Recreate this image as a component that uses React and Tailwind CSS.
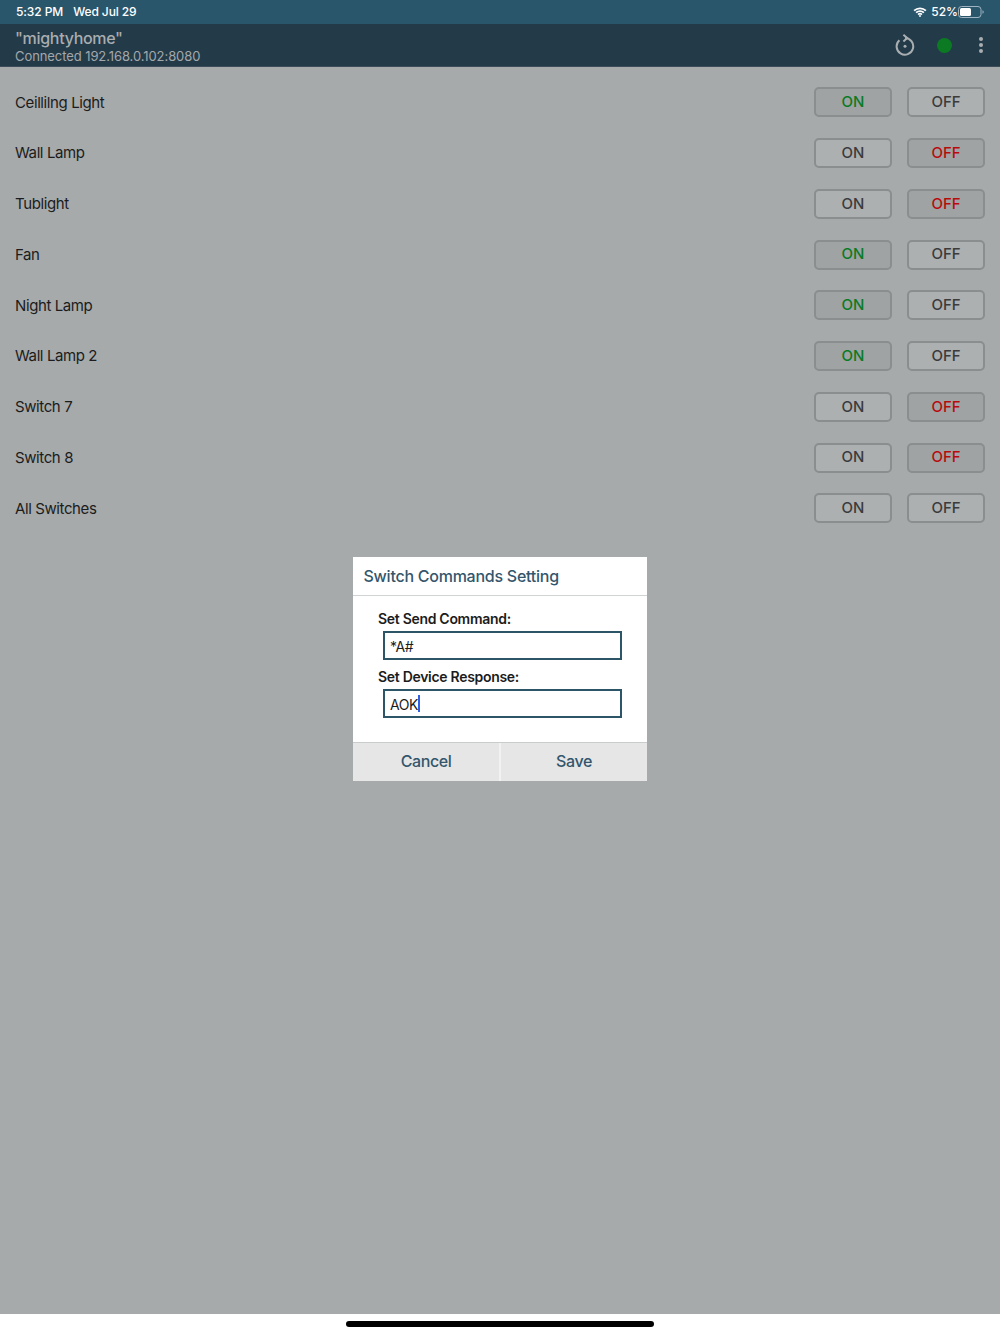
const rows = [
  ["Ceillilng Light", "on"],
  ["Wall Lamp", "off"],
  ["Tublight", "off"],
  ["Fan", "on"],
  ["Night Lamp", "on"],
  ["Wall Lamp 2", "on"],
  ["Switch 7", "off"],
  ["Switch 8", "off"],
  ["All Switches", "none"],
];

function SwitchButton({ label, active }) {
  const activeClass = label === "ON" ? "bg-[#9fa3a4] text-[#0b7a22]" : "bg-[#9fa3a4] text-[#b80c0c]";
  return (
    <div className={`flex h-[30px] w-[78px] items-center justify-center rounded-[5px] border-2 border-[#8a8e8f] text-[15px] font-medium ${active ? activeClass : "bg-[#acb0b1] text-[#3b3b3b]"}`}>
      {label}
    </div>
  );
}

function Wifi() {
  return (
    <svg width="14" height="10" viewBox="0 0 15 11" fill="none" stroke="#fff" strokeWidth="1.9" strokeLinecap="butt">
      <path d="M1 4.1a9.4 9.4 0 0 1 13 0" />
      <path d="M3.2 6.3a6.2 6.2 0 0 1 8.6 0" />
      <path d="M5.4 8.4a3 3 0 0 1 4.2 0" />
      <circle cx="7.5" cy="9.9" r="1" fill="#fff" stroke="none" />
    </svg>
  );
}

function Battery() {
  return (
    <svg width="26" height="12" viewBox="0 0 26 12" fill="none">
      <rect x="0.5" y="0.5" width="22.5" height="11" rx="3" stroke="#9fb4c0" />
      <rect x="2" y="2" width="11" height="8" rx="1.5" fill="#fff" />
      <path d="M24.5 4.2c.8.3 1.2 1 1.2 1.8s-.4 1.5-1.2 1.8z" fill="#9fb4c0" />
    </svg>
  );
}

function Refresh() {
  return (
    <svg width="20" height="22" viewBox="0 0 20 22" fill="none" stroke="#a9aeb1" strokeWidth="2">
      <path d="M4.4 6.2a8.3 8.3 0 1 0 5.6-2.1" />
      <path d="M8.4 0.8 12.2 4.1 8.4 7.4" strokeLinejoin="miter" />
      <circle cx="10" cy="12.3" r="1.5" fill="#a9aeb1" stroke="none" />
    </svg>
  );
}

export default function App() {
  return (
    <div className="relative flex h-[1334px] w-[1000px] flex-col overflow-hidden bg-white font-['Inter','Liberation_Sans',sans-serif]">
      <div className="flex h-6 items-center justify-between bg-[#2a566c] pl-4 pr-[16px] text-[12px] font-medium tracking-[-0.1px] text-white">
        <div className="flex gap-[10px]">
          <span>5:32 PM</span>
          <span>Wed Jul 29</span>
        </div>
        <div className="flex items-center">
          <Wifi />
          <span className="ml-[4px] tracking-normal">52%</span>
          <Battery />
        </div>
      </div>

      <div className="flex h-[43px] items-center justify-between border-b border-[#3d4c58] bg-[#233a49] pl-[15px] pr-[17px] pt-[1px]">
        <div className="flex flex-col">
          <span className="text-[16px] font-medium leading-[21px] tracking-[-0.3px] text-[#a9adaf]">"mightyhome"</span>
          <span className="text-[13px] leading-[15px] tracking-[-0.08px] text-[#a3a8aa]">Connected 192.168.0.102:8080</span>
        </div>
        <div className="-mt-[1px] flex items-center">
          <Refresh />
          <div className="ml-[22px] h-[15px] w-[15px] rounded-full bg-[#0b7a22]" />
          <div className="ml-[27px] flex flex-col gap-[2px]">
            <div className="h-1 w-1 rounded-full bg-[#a9aeb1]" />
            <div className="h-1 w-1 rounded-full bg-[#a9aeb1]" />
            <div className="h-1 w-1 rounded-full bg-[#a9aeb1]" />
          </div>
        </div>
      </div>

      <div className="flex-1 bg-[#a6aaab] pt-[10px]">
        {rows.map(([name, state]) => (
          <div key={name} className="flex h-[50.75px] items-center justify-between px-[15px]">
            <span className="pt-[1px] text-[15px] tracking-[-0.4px] text-[#1c1c1c]">{name}</span>
            <div className="flex gap-[15px]">
              <SwitchButton label="ON" active={state === "on"} />
              <SwitchButton label="OFF" active={state === "off"} />
            </div>
          </div>
        ))}
      </div>

      <div className="relative h-5 bg-white">
        <div className="absolute left-[346px] top-[7px] h-[6px] w-[308px] rounded-full bg-black" />
      </div>

      <div className="absolute left-[353px] top-[557px] flex w-[294px] flex-col bg-white">
        <div className="flex h-[39px] items-center border-b border-[#d0d3d4] pl-[10.5px] text-[16px] font-medium tracking-[-0.25px] text-[#33566d]">
          Switch Commands Setting
        </div>
        <div className="flex h-[146px] flex-col pl-[25px] pt-[13px]">
          <div className="text-[14px] font-semibold leading-[19px] tracking-[-0.3px] text-[#1c1c1c]">Set Send Command:</div>
          <div className="ml-[5px] mt-[3px] flex h-[29px] w-[239px] items-center border-2 border-[#2d5568] pl-[5px] pt-[2px] text-[14px] tracking-[-0.4px] text-[#1c1c1c]">*A#</div>
          <div className="mt-[7px] text-[14px] font-semibold leading-[19px] tracking-[-0.3px] text-[#1c1c1c]">Set Device Response:</div>
          <div className="ml-[5px] mt-[3px] flex h-[29px] w-[239px] items-center border-2 border-[#2d5568] pl-[5px] pt-[2px] text-[14px] tracking-[-0.4px] text-[#1c1c1c]">
            AOK
            <span className="-mt-[2px] h-[17px] w-[2px] bg-[#2f5fe8]" />
          </div>
        </div>
        <div className="flex h-[39px] border-t border-[#c9cccd] bg-[#e6e6e6] pb-[2px] text-[16px] font-medium tracking-[-0.4px] text-[#33566d]">
          <div className="flex flex-1 items-center justify-center">Cancel</div>
          <div className="h-[38px] w-[2px] bg-[#f2f2f2]" />
          <div className="flex flex-1 items-center justify-center">Save</div>
        </div>
      </div>
    </div>
  );
}
